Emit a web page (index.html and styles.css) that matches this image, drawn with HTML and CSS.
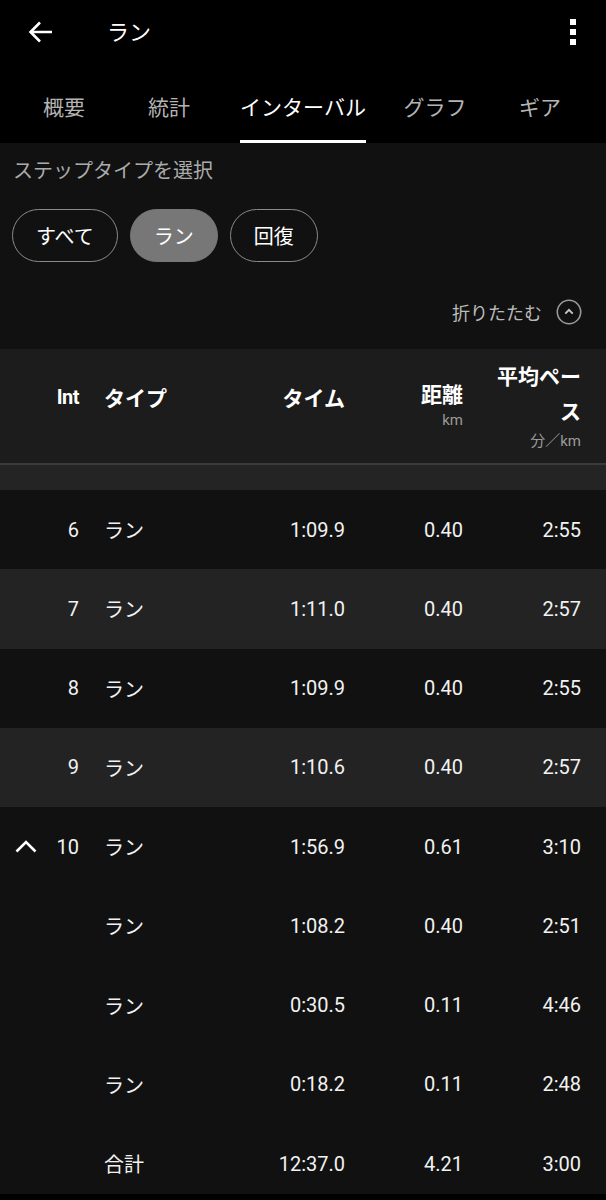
FILE: index.html
```html
<!doctype html>
<html lang="ja">
<head>
	<meta charset="UTF-8">
	<title>ラン</title>
	<link rel="stylesheet" href="styles.css">
</head>
<body>
	<header class="topbar">
		<svg class="back" width="26" height="24" viewBox="0 0 26 24">
			<path d="M24 12H2.5M12 2.5L2.5 12L12 21.5" fill="none" stroke="#fff" stroke-width="2.6"/>
		</svg>
		<h1 class="title">ラン</h1>
		<div class="kebab"><i></i><i></i><i></i></div>
	</header>

	<nav class="tabs">
		<div class="tab"><span>概要</span></div>
		<div class="tab"><span>統計</span></div>
		<div class="tab active"><span>インターバル</span></div>
		<div class="tab"><span>グラフ</span></div>
		<div class="tab"><span>ギア</span></div>
	</nav>

	<main class="content">
		<p class="filter-label">ステップタイプを選択</p>
		<div class="chips">
			<div class="chip">すべて</div>
			<div class="chip on">ラン</div>
			<div class="chip">回復</div>
		</div>

		<div class="collapse">
			<span>折りたたむ</span>
			<svg width="26" height="26" viewBox="0 0 26 26">
				<circle cx="13" cy="13" r="11.7" fill="none" stroke="#9a9a9a" stroke-width="1.6"/>
				<path d="M9.3 14.6L13 10.9L16.7 14.6" fill="none" stroke="#c8c8c8" stroke-width="1.9"/>
			</svg>
		</div>

		<div class="table">
			<div class="row head">
				<div class="c-int">Int</div>
				<div class="c-type">タイプ</div>
				<div class="c-num">タイム</div>
				<div class="c-num stack">距離<small>km</small></div>
				<div class="c-num pace">平均ペース<small>分／km</small></div>
			</div>
			<div class="band"></div>

			<div class="row">
				<div class="c-int">6</div><div class="c-type">ラン</div>
				<div class="c-num">1:09.9</div><div class="c-num">0.40</div><div class="c-num">2:55</div>
			</div>
			<div class="row alt">
				<div class="c-int">7</div><div class="c-type">ラン</div>
				<div class="c-num">1:11.0</div><div class="c-num">0.40</div><div class="c-num">2:57</div>
			</div>
			<div class="row">
				<div class="c-int">8</div><div class="c-type">ラン</div>
				<div class="c-num">1:09.9</div><div class="c-num">0.40</div><div class="c-num">2:55</div>
			</div>
			<div class="row alt">
				<div class="c-int">9</div><div class="c-type">ラン</div>
				<div class="c-num">1:10.6</div><div class="c-num">0.40</div><div class="c-num">2:57</div>
			</div>
			<div class="row">
				<div class="c-int open">
					<svg width="22" height="13" viewBox="0 0 22 13"><path d="M1.5 11.5L11 2L20.5 11.5" fill="none" stroke="#fff" stroke-width="2.6"/></svg>
					10
				</div>
				<div class="c-type">ラン</div>
				<div class="c-num">1:56.9</div><div class="c-num">0.61</div><div class="c-num">3:10</div>
			</div>
			<div class="row">
				<div class="c-int"></div><div class="c-type">ラン</div>
				<div class="c-num">1:08.2</div><div class="c-num">0.40</div><div class="c-num">2:51</div>
			</div>
			<div class="row">
				<div class="c-int"></div><div class="c-type">ラン</div>
				<div class="c-num">0:30.5</div><div class="c-num">0.11</div><div class="c-num">4:46</div>
			</div>
			<div class="row">
				<div class="c-int"></div><div class="c-type">ラン</div>
				<div class="c-num">0:18.2</div><div class="c-num">0.11</div><div class="c-num">2:48</div>
			</div>
			<div class="row">
				<div class="c-int"></div><div class="c-type">合計</div>
				<div class="c-num">12:37.0</div><div class="c-num">4.21</div><div class="c-num">3:00</div>
			</div>
		</div>
	</main>

	<div class="navbar"></div>
</body>
</html>
```

FILE: styles.css
```css
*{
	margin: 0;
	padding: 0;
	box-sizing: border-box;
}
body{
	background: #111;
	color: #f2f2f2;
	font-family: Roboto, "Noto Sans CJK JP", sans-serif;
	width: 606px;
}
.topbar{
	height: 64px;
	background: #000;
	display: flex;
	align-items: center;
	padding-left: 28px;
}
.topbar .title{
	font-size: 22px;
	font-weight: 400;
	margin-left: 53px;
	margin-bottom: 4px;
	color: #fff;
}
.kebab{
	margin-left: auto;
	margin-right: 30px;
	display: flex;
	flex-direction: column;
	gap: 4px;
}
.kebab i{
	display: block;
	width: 6px;
	height: 6px;
	background: #fff;
}
.tabs{
	height: 79px;
	background: #000;
	display: grid;
	grid-template-columns: 128px 82px 186px 78px 1fr;
}
.tab{
	display: flex;
	justify-content: center;
	align-items: flex-end;
}
.tab span{
	font-size: 21px;
	line-height: 30px;
	padding-bottom: 17px;
	border-bottom: 3px solid transparent;
	color: #b4b4b4;
}
.tab.active span{
	color: #fff;
	border-bottom-color: #fff;
}
.filter-label{
	padding: 14px 13px 0;
	font-size: 20px;
	line-height: 28px;
	color: #ababab;
}
.chips{
	display: flex;
	gap: 12px;
	margin-top: 24px;
	padding-left: 12px;
}
.chip{
	height: 53px;
	padding: 0 23px;
	border: 1.5px solid #8a8a8a;
	border-radius: 27px;
	display: flex;
	align-items: center;
	font-size: 20px;
	color: #fff;
}
.chip.on{
	background: #777;
	border-color: #777;
}
.collapse{
	margin-top: 33px;
	height: 34px;
	display: flex;
	justify-content: flex-end;
	align-items: center;
	gap: 14px;
	padding-right: 24px;
	font-size: 18px;
	color: #bbb;
}
.table{
	margin-top: 20px;
}
.row{
	display: grid;
	grid-template-columns: 79px 145px 121px 118px 118px;
	padding-right: 25px;
	height: 79.25px;
	align-items: center;
	font-size: 20px;
}
.row.alt{
	background: #232323;
}
.c-int{
	display: flex;
	justify-content: flex-end;
	align-items: center;
}
.c-int.open{
	justify-content: space-between;
	padding-left: 15px;
}
.c-type{
	padding-left: 25px;
}
.c-num{
	text-align: right;
}
.row.head{
	height: 116px;
	background: #1c1c1c;
	border-bottom: 2px solid #3a3a3a;
	font-weight: 700;
	font-size: 21px;
	color: #fff;
}
.row.head .c-int,
.row.head .c-type,
.row.head > .c-num:nth-child(3){
	margin-bottom: 18px;
}
.row.head .c-int{
	font-size: 20px;
	letter-spacing: -0.5px;
}
.row.head small{
	display: block;
	font-size: 15px;
	font-weight: 400;
	color: #9a9a9a;
}
.row.head .stack{
	line-height: 26px;
}
.row.head .stack small{
	line-height: 20px;
	margin-top: 2px;
}
.row.head .pace{
	line-height: 35px;
	padding-left: 26px;
}
.row.head .pace small{
	line-height: 22px;
}
.band{
	height: 25px;
	background: #242424;
}
.navbar{
	position: fixed;
	left: 0;
	bottom: 0;
	width: 606px;
	height: 6px;
	background: #000;
}
```
